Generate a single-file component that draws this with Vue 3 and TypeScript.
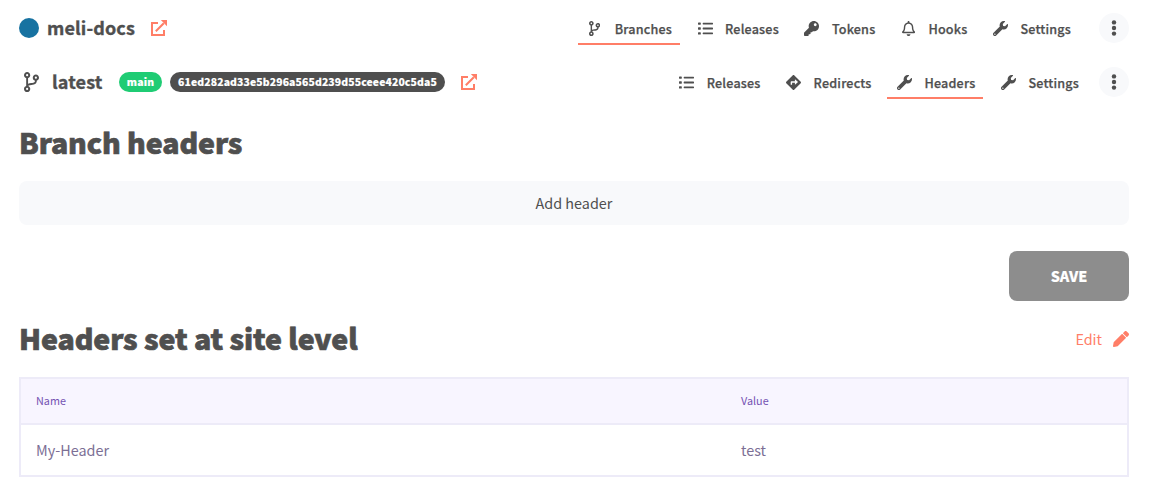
<script setup lang="ts">
interface Glyph {
  box: string
  d: string
}

interface NavItem {
  label: string
  icon: string
  active?: boolean
}

const glyphs: Record<string, Glyph> = {
  branch: {
    box: '0 0 384 512',
    d: 'M384 144c0-44.2-35.8-80-80-80s-80 35.8-80 80c0 36.4 24.3 67.1 57.5 76.8-.6 16.1-4.2 28.5-11 36.9-15.4 19.2-49.3 22.4-85.2 25.7-28.2 2.6-57.4 5.4-81.3 16.9v-144c32.5-10.2 56-40.5 56-76.3 0-44.2-35.8-80-80-80S0 35.8 0 80c0 35.8 23.5 66.1 56 76.3v199.3C23.5 365.9 0 396.2 0 432c0 44.2 35.8 80 80 80s80-35.8 80-80c0-34-21.2-63.1-51.2-74.6 3.1-5.2 7.8-9.8 14.9-13.4 16.2-8.2 40.4-10.4 66.1-12.8 42.2-3.9 90-8.4 118.2-43.4 14-17.4 21.1-39.8 21.6-67.9 31.6-10.8 54.4-40.7 54.4-75.9zM80 52a28 28 0 1 1 0 56 28 28 0 0 1 0-56zm0 352a28 28 0 1 1 0 56 28 28 0 0 1 0-56zm224-288a28 28 0 1 1 0 56 28 28 0 0 1 0-56z',
  },
  list: {
    box: '0 0 512 512',
    d: 'M16 48h64a16 16 0 0 1 16 16v48a16 16 0 0 1-16 16H16a16 16 0 0 1-16-16V64a16 16 0 0 1 16-16zm0 168h64a16 16 0 0 1 16 16v48a16 16 0 0 1-16 16H16a16 16 0 0 1-16-16v-48a16 16 0 0 1 16-16zm0 168h64a16 16 0 0 1 16 16v48a16 16 0 0 1-16 16H16a16 16 0 0 1-16-16v-48a16 16 0 0 1 16-16zM176 60h320a16 16 0 0 1 16 16v28a16 16 0 0 1-16 16H176a16 16 0 0 1-16-16V76a16 16 0 0 1 16-16zm0 164h320a16 16 0 0 1 16 16v32a16 16 0 0 1-16 16H176a16 16 0 0 1-16-16v-32a16 16 0 0 1 16-16zm0 168h320a16 16 0 0 1 16 16v28a16 16 0 0 1-16 16H176a16 16 0 0 1-16-16v-28a16 16 0 0 1 16-16z',
  },
  key: {
    box: '0 0 512 512',
    d: 'M512 176.001C512 273.203 433.202 352 336 352c-11.22 0-22.19-1.062-32.827-3.069l-24.012 27.014A23.999 23.999 0 0 1 261.223 384H224v40c0 13.255-10.745 24-24 24h-40v40c0 13.255-10.745 24-24 24H24c-13.255 0-24-10.745-24-24v-78.059c0-6.365 2.529-12.47 7.029-16.971l161.802-161.802C163.108 213.814 160 195.271 160 176 160 78.798 238.797.001 335.999 0 433.488-.001 512 78.511 512 176.001zM336 128c0 26.51 21.49 48 48 48s48-21.49 48-48-21.49-48-48-48-48 21.49-48 48z',
  },
  bell: {
    box: '0 0 448 512',
    d: 'M439.39 362.29c-19.32-20.76-55.47-51.99-55.47-154.29 0-77.7-54.48-139.9-127.94-155.16V32c0-17.67-14.32-32-31.98-32s-31.98 14.33-31.98 32v20.84C118.56 68.1 64.08 130.3 64.08 208c0 102.3-36.15 133.53-55.47 154.29-6 6.45-8.66 14.16-8.61 21.71.11 16.4 12.98 32 32.1 32h383.8c19.12 0 32-15.6 32.1-32 .05-7.55-2.61-15.27-8.61-21.71zM67.53 368c21.22-27.97 44.42-74.33 44.53-159.42 0-.2-.06-.38-.06-.58 0-61.86 50.14-112 112-112s112 50.14 112 112c0 .2-.06.38-.06.58.11 85.1 23.31 131.46 44.53 159.42H67.53zM224 512c35.32 0 63.97-28.65 63.97-64H160.03c0 35.35 28.65 64 63.97 64z',
  },
  wrench: {
    box: '0 0 512 512',
    d: 'M507.73 109.1c-2.24-9.03-13.54-12.09-20.12-5.51l-74.36 74.36-67.88-11.31-11.31-67.88 74.36-74.36c6.62-6.62 3.43-17.9-5.66-20.16-47.38-11.74-99.55.91-136.58 37.93-39.64 39.64-50.55 97.1-34.05 147.2L18.74 402.76c-24.99 24.99-24.99 65.51 0 90.5 24.99 24.99 65.51 24.99 90.5 0l213.21-213.21c50.12 16.71 107.47 5.68 147.37-34.22 37.07-37.07 49.7-89.32 37.91-136.73zM64 472c-13.25 0-24-10.75-24-24 0-13.26 10.75-24 24-24s24 10.74 24 24c0 13.25-10.75 24-24 24z',
  },
  redirect: {
    box: '0 0 512 512',
    d: 'M502.61 233.32L278.68 9.39c-12.52-12.52-32.83-12.52-45.36 0L9.39 233.32c-12.52 12.53-12.52 32.83 0 45.36l223.93 223.93c12.52 12.53 32.83 12.53 45.36 0l223.93-223.93c12.52-12.53 12.52-32.83 0-45.36zm-100.98 12.56l-84.21 77.73c-5.12 4.73-13.43 1.1-13.43-5.88V264h-96v64c0 4.42-3.58 8-8 8h-32c-4.42 0-8-3.58-8-8v-80c0-17.67 14.33-32 32-32h112v-53.73c0-6.97 8.3-10.61 13.43-5.88l84.21 77.73c3.43 3.17 3.43 8.59 0 11.76z',
  },
  pencil: {
    box: '0 0 512 512',
    d: 'M497.9 142.1l-46.1 46.1c-4.7 4.7-12.3 4.7-17 0l-111-111c-4.7-4.7-4.7-12.3 0-17l46.1-46.1c18.7-18.7 49.1-18.7 67.9 0l60.1 60.1c18.8 18.7 18.8 49.1 0 67.9zM284.2 99.8L21.6 362.4.4 483.9c-2.9 16.4 11.4 30.6 27.8 27.8l121.5-21.3 262.6-262.6c4.7-4.7 4.7-12.3 0-17l-111-111c-4.8-4.7-12.4-4.7-17.1 0z',
  },
}

const siteNav: NavItem[] = [
  { label: 'Branches', icon: 'branch', active: true },
  { label: 'Releases', icon: 'list' },
  { label: 'Tokens', icon: 'key' },
  { label: 'Hooks', icon: 'bell' },
  { label: 'Settings', icon: 'wrench' },
]

const branchNav: NavItem[] = [
  { label: 'Releases', icon: 'list' },
  { label: 'Redirects', icon: 'redirect' },
  { label: 'Headers', icon: 'wrench', active: true },
  { label: 'Settings', icon: 'wrench' },
]

const siteHeaders = [{ name: 'My-Header', value: 'test' }]
</script>

<template>
  <div class="page">
    <header class="bar">
      <span class="dot"></span>
      <span class="title site">meli-docs</span>
      <svg class="external" viewBox="0 0 16 16">
        <path d="M7 3H1v12h12v-5M4.8 11.2l8-8" />
        <path class="head" d="M9.8 0H16v6.2z" />
      </svg>
      <nav class="nav">
        <a v-for="item in siteNav" :key="item.label" class="item" :class="{ active: item.active }">
          <span class="ico"><svg :viewBox="glyphs[item.icon].box"><path :d="glyphs[item.icon].d" /></svg></span>
          <span class="label">{{ item.label }}</span>
        </a>
      </nav>
      <button class="more">
        <svg viewBox="0 0 6 16"><circle cx="3" cy="2.4" r="2.2" /><circle cx="3" cy="8" r="2.2" /><circle cx="3" cy="13.6" r="2.2" /></svg>
      </button>
    </header>

    <header class="bar second">
      <svg class="fork" :viewBox="glyphs.branch.box"><path :d="glyphs.branch.d" /></svg>
      <span class="title branch">latest</span>
      <span class="pill main">main</span>
      <span class="pill hash">61ed282ad33e5b296a565d239d55ceee420c5da5</span>
      <svg class="external" viewBox="0 0 16 16">
        <path d="M7 3H1v12h12v-5M4.8 11.2l8-8" />
        <path class="head" d="M9.8 0H16v6.2z" />
      </svg>
      <nav class="nav">
        <a v-for="item in branchNav" :key="item.label" class="item" :class="{ active: item.active }">
          <span class="ico"><svg :viewBox="glyphs[item.icon].box"><path :d="glyphs[item.icon].d" /></svg></span>
          <span class="label">{{ item.label }}</span>
        </a>
      </nav>
      <button class="more">
        <svg viewBox="0 0 6 16"><circle cx="3" cy="2.4" r="2.2" /><circle cx="3" cy="8" r="2.2" /><circle cx="3" cy="13.6" r="2.2" /></svg>
      </button>
    </header>

    <h1 class="heading first">Branch headers</h1>
    <button class="add">Add header</button>
    <div class="actions"><button class="save">SAVE</button></div>

    <div class="section">
      <h1 class="heading level">Headers set at site level</h1>
      <a class="edit">
        <span>Edit</span>
        <svg :viewBox="glyphs.pencil.box"><path :d="glyphs.pencil.d" /></svg>
      </a>
    </div>

    <div class="table">
      <div class="row head-row"><span>Name</span><span>Value</span></div>
      <div v-for="h in siteHeaders" :key="h.name" class="row">
        <span>{{ h.name }}</span><span>{{ h.value }}</span>
      </div>
    </div>
  </div>
</template>

<style>
body {
  margin: 0;
  background: #fff;
}
</style>

<style scoped>
.page {
  box-sizing: border-box;
  width: 1150px;
  height: 494px;
  padding: 13px 21px 0 19px;
  overflow: hidden;
  color: #4f4f4f;
  font-family: "Noto Sans CJK SC", "Noto Sans", sans-serif;
}
button {
  border: 0;
  padding: 0;
  color: inherit;
  font-family: inherit;
}
svg {
  display: block;
  fill: currentColor;
}
.bar {
  display: flex;
  align-items: center;
  height: 30px;
}
.second {
  margin-top: 24px;
}
.dot {
  width: 20px;
  height: 20px;
  border-radius: 50%;
  background: #1772a1;
}
.title {
  padding-bottom: 2px;
  font-size: 18px;
  font-weight: 700;
  line-height: 28px;
  letter-spacing: 0.12px;
  white-space: nowrap;
  -webkit-text-stroke: 0.35px currentColor;
}
.site {
  width: 104px;
  margin-left: 8px;
}
.fork {
  width: 15px;
  height: 20px;
  margin-left: 5px;
}
.branch {
  width: 67px;
  margin-left: 13px;
}
.external {
  width: 16px;
  height: 16px;
  color: #ff7e67;
  fill: none;
  stroke: currentColor;
  stroke-width: 2;
}
.external .head {
  fill: currentColor;
  stroke: none;
}
.pill {
  box-sizing: border-box;
  height: 20px;
  border-radius: 10px;
  color: #fff;
  font-size: 10.4px;
  font-weight: 900;
  line-height: 19px;
  letter-spacing: 0.25px;
  text-align: center;
  white-space: nowrap;
  -webkit-text-stroke: 0.15px currentColor;
}
.main {
  width: 43px;
  background: #1fcc74;
}
.hash {
  width: 275px;
  margin: 0 16px 0 8px;
  background: #4f4f4f;
  letter-spacing: 0.13px;
}
.nav {
  display: flex;
  gap: 8px;
  margin-left: auto;
  margin-right: 20px;
}
.second .nav {
  margin-right: 12px;
}
.item {
  display: flex;
  align-items: center;
  box-sizing: border-box;
  height: 34px;
  padding: 1px 8px 0;
  border-bottom: 2px solid transparent;
}
.active {
  border-bottom-color: #ff7e67;
}
.ico {
  display: flex;
  justify-content: center;
  width: 18px;
  margin-right: 11px;
  padding-top: 2px;
}
.ico svg {
  height: 15px;
}
.label {
  padding-top: 2px;
  font-size: 12.6px;
  font-weight: 500;
  line-height: 20px;
  letter-spacing: 0.18px;
  -webkit-text-stroke: 0.25px currentColor;
}
.more {
  display: flex;
  align-items: center;
  justify-content: center;
  width: 30px;
  height: 30px;
  border-radius: 50%;
  background: #f8f9fb;
}
.more svg {
  width: 6px;
  height: 16px;
}
.heading {
  margin: 0;
  padding-bottom: 2px;
  font-size: 28.5px;
  font-weight: 900;
  line-height: 38px;
  letter-spacing: -0.09px;
  white-space: nowrap;
  -webkit-text-stroke: 0.7px currentColor;
}
.first {
  margin-top: 26px;
}
.add {
  display: block;
  width: 100%;
  height: 44px;
  margin-top: 18px;
  padding-bottom: 2px;
  border-radius: 8px;
  background: #f8f9fb;
  font-size: 14.4px;
}
.actions {
  display: flex;
  justify-content: flex-end;
  margin-top: 26px;
}
.save {
  width: 120px;
  height: 50px;
  padding-bottom: 2px;
  border-radius: 8px;
  background: #8d8d8d;
  color: #fff;
  font-size: 14.4px;
  font-weight: 900;
  -webkit-text-stroke: 0.15px currentColor;
}
.section {
  display: flex;
  align-items: center;
  justify-content: space-between;
  margin-top: 18px;
}
.edit {
  display: flex;
  align-items: center;
  gap: 11px;
  color: #ff7e67;
  font-size: 14.4px;
}
.edit span {
  padding-bottom: 2px;
}
.edit svg {
  width: 16px;
  height: 16px;
}
.table {
  margin-top: 18px;
  border: 2px solid #edebf8;
}
.row {
  display: grid;
  grid-template-columns: 705px 1fr;
  align-items: center;
  box-sizing: border-box;
  height: 50px;
  padding: 0 0 2px 15px;
  color: #7c6f95;
  font-size: 14.4px;
}
.head-row {
  height: 46px;
  border-bottom: 2px solid #edebf8;
  background: #f8f5ff;
  color: #7553b3;
  font-size: 10.8px;
}
</style>
